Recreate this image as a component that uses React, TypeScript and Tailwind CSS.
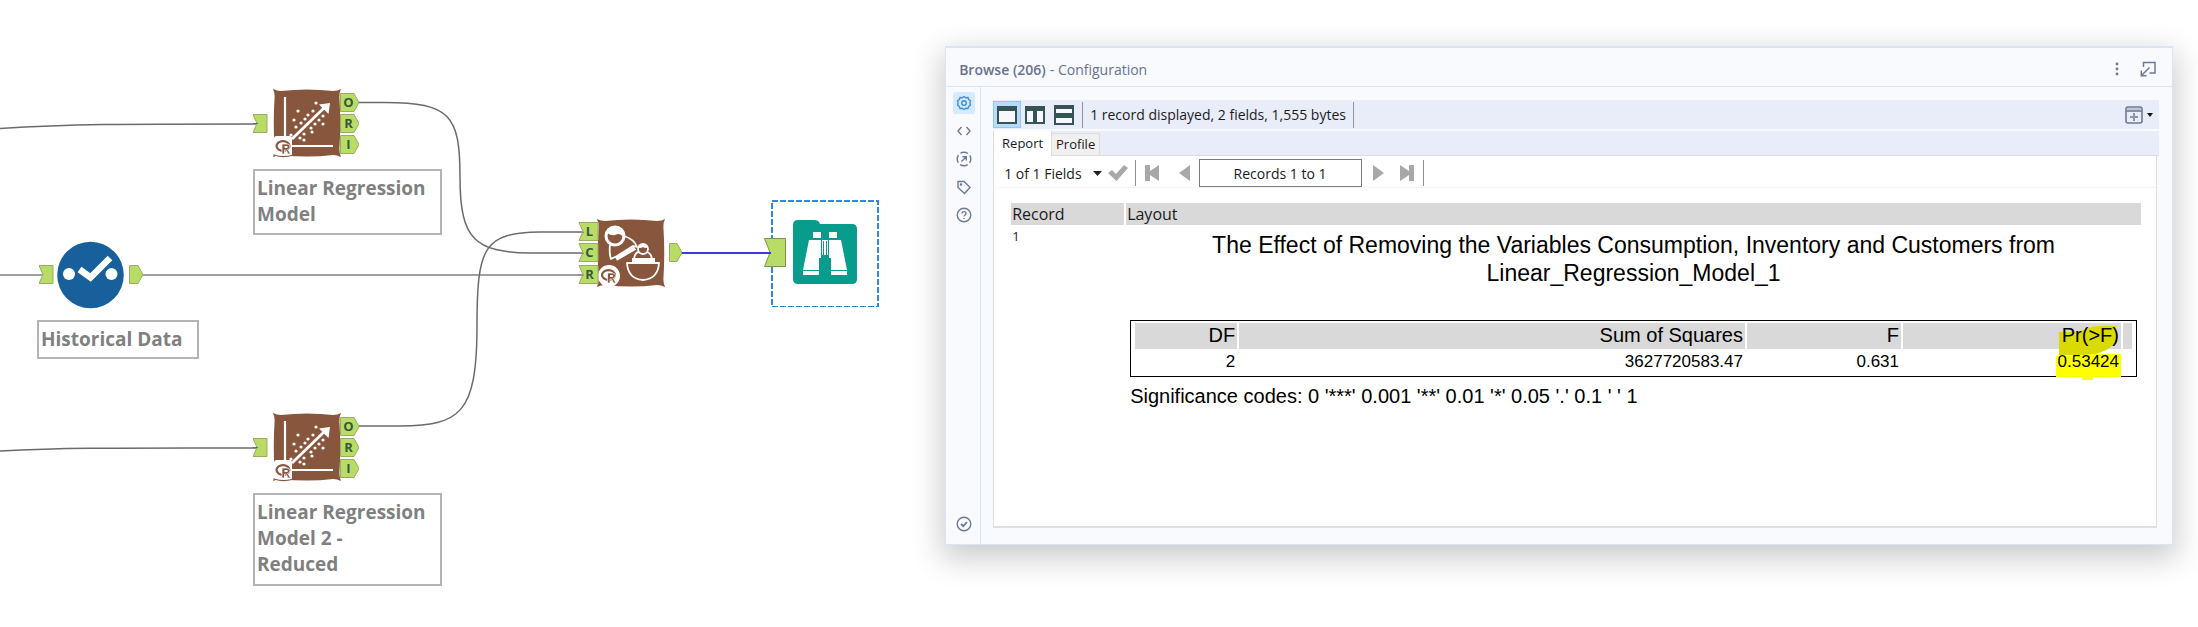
import { useState } from 'react';
import type { ReactNode } from 'react';

const STROKE = '#6b7a99';

type AnchorProps = { x: number; y: number; letter?: string; w?: number; h?: number };

const InAnchor = ({ x, y, letter, w = 14, h = 19 }: AnchorProps) => (
    <g transform={`translate(${x} ${y})`}>
        <path d={`M0 .5H${w}V${h - 0.5}H0L4 ${h / 2}Z`} fill="#b9dc66" stroke="#96ad62" strokeWidth="1" />
        {letter && (
            <text x={w / 2 + 1} y="13.5" textAnchor="middle" fontSize="13" fontWeight="700" fill="#35583f">
                {letter}
            </text>
        )}
    </g>
);

const OutAnchor = ({ x, y, letter, w = 14, h = 19 }: AnchorProps) => (
    <g transform={`translate(${x} ${y})`}>
        <path d={`M.5 .5H${w - 5}L${w} ${h / 2}L${w - 5} ${h - 0.5}H.5Z`} fill="#b9dc66" stroke="#96ad62" strokeWidth="1" />
        {letter && (
            <text x={w / 2 - 1} y="14" textAnchor="middle" fontSize="13" fontWeight="700" fill="#35583f">
                {letter}
            </text>
        )}
    </g>
);

const Pillow = () => (
    <path d="M0 0Q4 2 8 2Q34 -1 60 2Q65 2 68 0Q66 4 66.500 10Q68 34 66.500 58Q66 64 68 68Q64 66 60 66Q34 69 8 66Q4 66 0 68Q2 64 1.500 58Q0 34 1.500 10Q2 4 0 0Z" fill="#88553d" />
);

const dots = [
    [25, 22], [43, 14], [21, 31], [40, 22], [35, 26], [32, 30], [28, 34], [50, 27],
    [50, 35], [42, 35], [23, 38], [38, 39], [39, 43], [31, 45], [31, 51], [27, 49], [18, 46], [46, 31],
];

const RLogo = () => (
    <g>
        <ellipse cx="8.500" cy="7" rx="6.500" ry="4.800" fill="none" stroke="#88553d" strokeWidth="2.200" />
        <path d="M7.500 15V5H12.500Q15.500 5 15.500 7.700Q15.500 10 13 10.500Q14 11 16 15H13.500L11.500 11H10V15Z" fill="#88553d" stroke="#fff" strokeWidth=".7" />
        <path d="M10 7H12.200Q13.300 7 13.300 8T12.200 9H10Z" fill="#fff" />
    </g>
);

const RegressionIcon = () => (
    <svg viewBox="0 0 106 70" className="block h-[70px] w-[106px]" fontFamily='"Open Sans", sans-serif'>
        <InAnchor x={0} y={25} />
        <path d="M0 34.500H5" stroke="#6b6b6b" />
        <g transform="translate(20 0)">
            <Pillow />
            <path d="M12 8V48M18 57H60" stroke="#fff" strokeWidth="2.200" fill="none" />
            <path d="M19 50L51 19" stroke="#fff" strokeWidth="2.800" />
            <path d="M46 15.500L57 14L55.500 25Z" fill="#fff" />
            {dots.map(([x, y]) => (
                <circle key={`${x}-${y}`} cx={x} cy={y} r="1.600" fill="#fff" />
            ))}
            <rect x="1" y="47" width="18" height="20" rx="2.500" fill="#fff" />
            <path d="M1 66Q10 69 19 66.500" fill="none" stroke="#88553d" strokeWidth="1.200" />
            <g transform="translate(1.500 50)">
                <RLogo />
            </g>
        </g>
        <OutAnchor x={87} y={4} letter="O" w={19} />
        <OutAnchor x={87} y={25} letter="R" w={19} />
        <OutAnchor x={87} y={46} letter="I" w={19} />
    </svg>
);

const SelectIcon = () => (
    <svg viewBox="0 0 104 68" className="block h-[68px] w-[104px]">
        <InAnchor x={0} y={24} />
        <circle cx="51.500" cy="34" r="33.300" fill="#17609b" />
        <circle cx="30" cy="33" r="6" fill="#fff" />
        <circle cx="72.500" cy="33" r="6" fill="#fff" />
        <path d="M40.500 28.500L51.500 36.500L71 17" fill="none" stroke="#fff" strokeWidth="6.500" />
        <OutAnchor x={90} y={24} w={14} />
    </svg>
);

const NestedTestIcon = () => (
    <svg viewBox="0 0 104 70" className="block h-[70px] w-[104px]" fontFamily='"Open Sans", sans-serif'>
        <g transform="translate(19 0)">
            <Pillow />
            <g fill="none" stroke="#fff" strokeWidth="1.800" strokeLinejoin="round">
                <circle cx="18" cy="17" r="9" strokeWidth="3" />
                <path d="M10 13Q13 7 20 9Q27 12 26 18Q23 13 18 16Q13 17 10 13Z" fill="#fff" stroke="none" />
                <path d="M13 26Q12 34 14 40L20 37L36 27L40 28Q37 20 27 17" />
                <path d="M19 40L38 29" strokeWidth="4" strokeLinejoin="miter" />
                <circle cx="46" cy="30" r="5" />
                <path d="M41 28Q46 23 51 28Q49 30 46 28Q43 30 41 28Z" fill="#fff" stroke="none" />
                <path d="M37 40Q38 33 42 33M50 33Q54 34 55 40" />
                <path d="M35 41H58" strokeWidth="4" />
                <path d="M30 44H62Q61 60 46 61Q31 60 30 44Z" />
            </g>
            <circle cx="12" cy="57" r="11" fill="#fff" />
            <g transform="translate(3 49)">
                <RLogo />
            </g>
        </g>
        <InAnchor x={1} y={3} letter="L" w={19} />
        <InAnchor x={1} y={24} letter="C" w={19} />
        <InAnchor x={1} y={46} letter="R" w={19} />
        <path d="M0 13.500H6M0 34.500H6M0 56H6" stroke="#8a8a8a" />
        <OutAnchor x={91} y={24} w={13} />
    </svg>
);

const BrowseIcon = () => (
    <svg viewBox="0 0 115 108" className="block h-[108px] w-[115px]">
        <rect x="8" y="2" width="106" height="106" fill="none" stroke="#2a8ae0" strokeWidth="2" strokeDasharray="6 2" />
        <path d="M29 26Q29 21 34 21H50Q55 21 56 25H88Q93 25 93 30V80Q93 85 88 85H34Q29 85 29 80Z" fill="#079c8c" />
        <g transform="translate(1 0)">
            <g fill="#fff">
                <path d="M48 33H56V39H48ZM64 33H72V39H64ZM57 41H63V56H57Z" />
                <path d="M44 41H56V59H54V76H38V71Z" />
                <path d="M76 41H64V59H66V76H82V71Z" />
            </g>
            <path d="M38 71.500H54M66 71.500H82M58.500 42V56M61.500 42V56" stroke="#079c8c" strokeWidth="1" />
        </g>
        <path d="M.5 39.500H21.500V67.500H.5L6 53.500Z" fill="#b9dc66" stroke="#7f9450" />
        <path d="M0 54H7" stroke="#3a3ae8" strokeWidth="2" />
    </svg>
);

const Caption = ({ children, className }: { children: ReactNode; className: string }) => (
    <div className={`border-2 border-[#b4b4b4] bg-white px-[2px] pt-[4px] text-[19px] leading-[26px] font-bold text-[#808080] ${className}`}>
        {children}
    </div>
);

const Workflow = () => (
    <section className="relative min-h-[627px] w-[43%] shrink-0" aria-label="Workflow canvas">
        <svg className="absolute top-0 left-0 h-[627px] w-[945px]" viewBox="0 0 945 627" fill="none" stroke="#6b6b6b" strokeWidth="1.500">
            <path d="M0 128.500C70 124 120 124 258 124" />
            <path d="M0 451C70 447.500 120 448 258 448" />
            <path d="M0 275H44" stroke="#a0a0a0" strokeWidth="2" />
            <path d="M142 275H583" stroke="#a0a0a0" strokeWidth="2" />
            <path d="M359 102.500H385C450 102.500 460 115 460 177C460 240 475 252 530 253H583" />
            <path d="M359 426H400C460 425 477 415 477 325C477 245 485 233 540 232H583" />
            <path d="M681 253H772" stroke="#3a3ae8" strokeWidth="2" />
        </svg>

        <div className="absolute top-[89px] left-[253px]">
            <RegressionIcon />
        </div>
        <Caption className="absolute top-[169px] left-[253px] h-[66px] w-[189px]">Linear Regression Model</Caption>

        <div className="absolute top-[241px] left-[39px]">
            <SelectIcon />
        </div>
        <Caption className="absolute top-[320px] left-[37px] h-[39px] w-[162px] whitespace-nowrap">Historical Data</Caption>

        <div className="absolute top-[413px] left-[253px]">
            <RegressionIcon />
        </div>
        <Caption className="absolute top-[493px] left-[253px] h-[93px] w-[189px]">
            Linear Regression Model 2 -<br />
            Reduced
        </Caption>

        <div className="absolute top-[219px] left-[578px]">
            <NestedTestIcon />
        </div>
        <div className="absolute top-[199px] left-[764px]">
            <BrowseIcon />
        </div>
    </section>
);

const railItems = [
    {
        label: 'Configuration',
        icon: (
            <>
                <path d="M8 1.500L9.800 2.800L12 2.500L12.700 4.500L14.500 5.800L13.900 8L14.500 10.200L12.700 11.500L12 13.500L9.800 13.200L8 14.500L6.200 13.200L4 13.500L3.300 11.500L1.500 10.200L2.100 8L1.500 5.800L3.300 4.500L4 2.500L6.200 2.800Z" />
                <circle cx="8" cy="8" r="2.300" />
            </>
        ),
    },
    { label: 'XML view', icon: <path d="M5.500 4L2 8L5.500 12M10.500 4L14 8L10.500 12" /> },
    {
        label: 'Navigation',
        icon: (
            <>
                <circle cx="8" cy="8" r="6.800" strokeDasharray="8 2.680" strokeDashoffset="4" />
                <path d="M5.500 10.500L10 6M6.500 5.700H10.300V9.500" />
            </>
        ),
    },
    {
        label: 'Annotation',
        icon: (
            <>
                <path d="M2 2.500H8L14 8.500L8.500 14.500L2 8.500Z" />
                <circle cx="5" cy="5.500" r=".6" />
            </>
        ),
    },
    {
        label: 'Help',
        icon: (
            <>
                <circle cx="8" cy="8" r="6.800" />
                <path d="M6 6.500C6 4 10 4 10 6.500C10 8 8 8 8 9.500M8 11V12" />
            </>
        ),
    },
];

const Rail = () => {
    const [active, setActive] = useState('Configuration');

    return (
        <nav className="flex w-[35px] shrink-0 flex-col items-center border-r border-[#dbe4f5] pt-[5px] pb-3 pl-[2px]">
            <div className="flex flex-col gap-[6px]">
                {railItems.map(({ label, icon }) => (
                    <button
                        key={label}
                        aria-label={label}
                        onClick={() => setActive(label)}
                        className={`flex h-[22px] w-[22px] items-center justify-center rounded-[3px] ${active === label ? 'bg-[#d6ebff]' : ''}`}
                    >
                        <svg viewBox="0 0 16 16" className="h-4 w-4" fill="none" stroke={active === label ? '#3d8fdc' : STROKE} strokeWidth="1.400">
                            {icon}
                        </svg>
                    </button>
                ))}
            </div>
            <button aria-label="Messages" className="mt-auto">
                <svg viewBox="0 0 16 16" className="h-4 w-4" fill="none" stroke={STROKE} strokeWidth="1.400">
                    <circle cx="8" cy="8" r="6.800" />
                    <path d="M5 8L7.200 10.200L11 6" strokeWidth="1.800" />
                </svg>
            </button>
        </nav>
    );
};

const Toolbar = () => (
    <div className="flex h-[29px] items-center bg-[#e9edf9] text-[#1b1b1b]">
        <button aria-label="Single pane" className="flex h-[27px] w-[28px] items-center justify-center border border-[#90c8f6] bg-[#b9dbf9]">
            <svg viewBox="0 0 20 18" className="h-[18px] w-5">
                <path d="M0 0H20V18H0Z" fill="#365454" />
                <path d="M2 5H18V16H2Z" fill="#f6f8fc" />
            </svg>
        </button>
        <button aria-label="Side by side" className="ml-[4px]">
            <svg viewBox="0 0 20 18" className="h-[18px] w-5">
                <path d="M0 0H20V18H0Z" fill="#365454" />
                <path d="M2 5H8V16H2ZM12 5H18V16H12Z" fill="#f6f8fc" />
            </svg>
        </button>
        <button aria-label="Stacked" className="ml-[9px]">
            <svg viewBox="0 0 20 20" className="h-5 w-5">
                <path d="M0 0H20V20H0Z" fill="#365454" />
                <path d="M2 4H18V8H2ZM2 13H18V18H2Z" fill="#f6f8fc" />
            </svg>
        </button>
        <div className="ml-2 flex h-[26px] items-center border-x border-[#8e929b] px-[7px] text-[14px] whitespace-nowrap">
            1 record displayed, 2 fields, 1,555 bytes
        </div>
        <button aria-label="Add" className="mr-[6px] ml-auto flex items-center gap-1">
            <svg viewBox="0 0 18 18" className="h-[18px] w-[18px]" fill="none" stroke={STROKE} strokeWidth="1.600">
                <rect x="1" y="1" width="16" height="16" rx="2" />
                <path d="M1 5H17" />
                <path d="M1.800 3H16.200" stroke="#b4bccb" />
                <path d="M9 7V15M5 11H13" stroke="#8d95a5" strokeWidth="2" />
            </svg>
            <svg viewBox="0 0 6 4" className="h-1 w-[6px]">
                <path d="M0 0H6L3 4Z" fill="#111" />
            </svg>
        </button>
    </div>
);

const RecordBar = () => (
    <div className="ml-1 flex h-[32px] items-center border-b border-[#f4f5f8] pt-[3px] pl-[6px] text-[14px] text-[#1b1b1b]">
        <button className="flex items-center gap-[11px] whitespace-nowrap">
            1 of 1 Fields
            <svg viewBox="0 0 9 5" className="h-[5px] w-[9px]">
                <path d="M0 0H9L4.500 5Z" fill="#222" />
            </svg>
        </button>
        <button aria-label="Apply" className="ml-[6px]">
            <svg viewBox="0 0 20 16" className="h-4 w-5">
                <path d="M0 8L4 5L8 9L16 0L20 3L8.500 16Z" fill="#a8a8a8" />
            </svg>
        </button>
        <div className="ml-[7px] h-[26px] w-px bg-[#8e8e8e]" />
        <button aria-label="First record" className="ml-[9px]">
            <svg viewBox="0 0 14 16" className="h-4 w-[14px]" fill="#a8a8a8">
                <path d="M0 0H5V6L14 0V16L5 10V16H0Z" />
            </svg>
        </button>
        <button aria-label="Previous record" className="ml-5">
            <svg viewBox="0 0 11 16" className="h-4 w-[11px]" fill="#a8a8a8">
                <path d="M11 0V16L0 8Z" />
            </svg>
        </button>
        <input
            aria-label="Record range"
            readOnly
            value="Records 1 to 1"
            className="ml-[9px] h-[28px] w-[163px] border border-[#7a7a7a] bg-white text-center outline-none"
        />
        <button aria-label="Next record" className="ml-[11px]">
            <svg viewBox="0 0 11 16" className="h-4 w-[11px]" fill="#a8a8a8">
                <path d="M0 0V16L11 8Z" />
            </svg>
        </button>
        <button aria-label="Last record" className="ml-4">
            <svg viewBox="0 0 14 16" className="h-4 w-[14px]" fill="#a8a8a8">
                <path d="M14 0H9V6L0 0V16L9 10V16H14Z" />
            </svg>
        </button>
        <div className="ml-[9px] h-[26px] w-px bg-[#8e8e8e]" />
    </div>
);

const Anova = () => (
    <div className="border border-black px-[2px] pt-[2px] pb-px">
        <table className="w-full table-fixed border-separate border-spacing-x-[2px] border-spacing-y-0 text-right font-['Liberation_Sans',sans-serif] text-black">
            <colgroup>
                <col className="w-[102px]" />
                <col />
                <col className="w-[154px]" />
                <col className="w-[218px]" />
                <col className="w-[9px]" />
            </colgroup>
            <thead>
                <tr className="h-[26px] text-[20px] leading-[24px]">
                    <th scope="col" className="bg-[#d9d9d9] px-[2px] pb-[2px] font-normal">DF</th>
                    <th scope="col" className="bg-[#d9d9d9] px-[2px] pb-[2px] font-normal">Sum of Squares</th>
                    <th scope="col" className="bg-[#d9d9d9] px-[2px] pb-[2px] font-normal">F</th>
                    <th scope="col" className="relative bg-[#d9d9d9] px-[2px] pb-[2px] font-normal">
                        <svg viewBox="0 0 60 30" className="absolute top-[2px] right-[2px] h-[30px] w-[60px]" fill="#dada00">
                            <path d="M0 7H18Q28 4 33 2Q40 0 57 1L58 16Q50 25 40 28Q25 32 0 30Z" />
                        </svg>
                        <span className="relative">Pr(&gt;F)</span>
                    </th>
                    <td className="bg-[#d9d9d9]" />
                </tr>
            </thead>
            <tbody>
                <tr className="h-[26px] text-[17px] leading-[26px]">
                    <td className="px-[2px]">2</td>
                    <td className="px-[2px]">3627720583.47</td>
                    <td className="px-[2px]">0.631</td>
                    <td className="relative px-[2px]">
                        <svg viewBox="0 0 65 28" className="absolute top-[4px] right-0 h-[28px] w-[65px]" fill="#ffff00">
                            <path d="M0 3H30V1H65V24H37V27H26V24H0Z" />
                        </svg>
                        <span className="relative">0.53424</span>
                    </td>
                    <td />
                </tr>
            </tbody>
        </table>
    </div>
);

const Report = () => (
    <div className="min-h-[338px] pt-[15px] pr-[13px] pl-[15px]">
        <table className="w-full table-fixed border-separate border-spacing-x-[2px] border-spacing-y-0 text-[#1b1b1b]">
            <colgroup>
                <col className="w-[113px]" />
                <col />
            </colgroup>
            <thead>
                <tr className="h-[22px] text-left text-[16px] leading-[22px]">
                    <th scope="col" className="bg-[#d9d9d9] px-px font-normal">Record</th>
                    <th scope="col" className="bg-[#d9d9d9] px-px font-normal">Layout</th>
                </tr>
            </thead>
            <tbody>
                <tr>
                    <td className="px-px pt-[2px] align-top text-[13px]">1</td>
                    <td className="px-[4px] pt-[6px] font-['Liberation_Sans',sans-serif] text-black">
                        <h2 className="mb-[33px] px-4 text-center text-[23px] leading-[28px]">
                            The Effect of Removing the Variables Consumption, Inventory and Customers from
                            <br />
                            Linear_Regression_Model_1
                        </h2>
                        <Anova />
                        <p className="mt-[6px] text-[20px] leading-[26px]">
                            Significance codes: 0 &apos;***&apos; 0.001 &apos;**&apos; 0.01 &apos;*&apos; 0.05 &apos;.&apos; 0.1 &apos; &apos; 1
                        </p>
                    </td>
                </tr>
            </tbody>
        </table>
    </div>
);

const ConfigurationPanel = () => {
    const [tab, setTab] = useState<'report' | 'profile'>('report');

    return (
        <section className="mt-[46px] mr-[25px] min-w-0 flex-1 border border-t-2 border-[#dbe4f5] bg-[#f9fafd] shadow-[0_10px_28px_4px_rgba(0,0,0,0.2)]">
            <header className="flex h-[39px] items-center border-b border-[#dbe4f5] pt-[4px] pr-[16px] pl-[13px] text-[14px] text-[#66738f]">
                <h1 className="font-semibold">Browse (206)</h1>
                <span className="ml-1">- Configuration</span>
                <button aria-label="More" className="ml-auto">
                    <svg viewBox="0 0 4 14" className="h-[14px] w-1" fill={STROKE}>
                        <circle cx="2" cy="2" r="1.400" />
                        <circle cx="2" cy="7" r="1.400" />
                        <circle cx="2" cy="12" r="1.400" />
                    </svg>
                </button>
                <button aria-label="Undock" className="ml-[21px]">
                    <svg viewBox="0 0 16 16" className="h-4 w-4" fill="none" stroke={STROKE} strokeWidth="1.500">
                        <path d="M3.500 6V1.500H15V12H9.500" />
                        <path d="M9.500 6.500L1.500 14.500M1.300 9.500V14.700H6.500" />
                    </svg>
                </button>
            </header>

            <div className="flex">
                <Rail />
                <main className="min-w-0 flex-1 pt-[13px] pr-[13px] pb-4 pl-3">
                    <Toolbar />
                    <div className="mt-[2px] flex h-[25px] items-end bg-[#e9edf9] text-[13px] text-[#1b1b1b]">
                        <button
                            onClick={() => setTab('report')}
                            className={tab === 'report' ? 'h-[25px] w-[59px] border-x border-[#dcdcdc] bg-white' : 'h-[23px] w-[59px] border border-[#dcdcdc] bg-[#f0f0f0]'}
                        >
                            Report
                        </button>
                        <button
                            onClick={() => setTab('profile')}
                            className={tab === 'profile' ? 'h-[25px] w-[48px] border-x border-[#dcdcdc] bg-white' : 'h-[23px] w-[48px] border border-l-0 border-[#dcdcdc] bg-[#f0f0f0]'}
                        >
                            Profile
                        </button>
                        <div className="h-px flex-1 bg-[#dcdcdc]" />
                    </div>
                    <div className="mr-[2px] border border-t-0 border-b-2 border-[#dcdfe3] bg-white">
                        <RecordBar />
                        <Report />
                    </div>
                </main>
            </div>
        </section>
    );
};

const App = () => (
    <div className="flex min-h-screen items-start bg-white font-['Open_Sans','Noto_Sans',sans-serif]">
        <Workflow />
        <ConfigurationPanel />
    </div>
);

export default App;
